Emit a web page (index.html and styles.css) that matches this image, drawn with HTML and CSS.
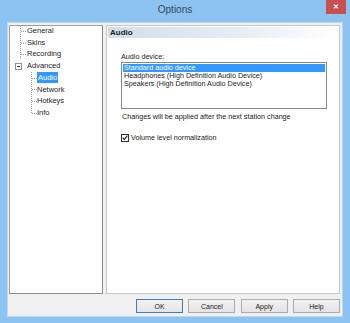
FILE: index.html
```html
<!DOCTYPE html>
<html lang="en">
<head>
    <meta charset="UTF-8">
    <title>Options</title>
    <link rel="stylesheet" href="styles.css">
</head>
<body>
    <div class="window">
        <div class="titlebar">
            <div class="title">Options</div>
            <div class="close-btn">&#x2715;</div>
        </div>

        <div class="client">
            <div class="panels">
                <div class="tree">
                    <ul class="tree-root">
                        <li class="tree-item">General</li>
                        <li class="tree-item">Skins</li>
                        <li class="tree-item">Recording</li>
                        <li class="tree-item tree-open">
                            <span class="expander"></span>Advanced
                            <ul class="tree-sub">
                                <li class="tree-item"><span class="selected">Audio</span></li>
                                <li class="tree-item">Network</li>
                                <li class="tree-item">Hotkeys</li>
                                <li class="tree-item">Info</li>
                            </ul>
                        </li>
                    </ul>
                </div>

                <div class="page">
                    <div class="page-header">Audio</div>
                    <div class="page-body">
                        <div class="field-label">Audio device:</div>
                        <div class="listbox">
                            <div class="list-item active">Standard audio device</div>
                            <div class="list-item">Headphones (High Definition Audio Device)</div>
                            <div class="list-item">Speakers (High Definition Audio Device)</div>
                        </div>
                        <div class="hint">Changes will be applied after the next station change</div>
                        <label class="check-row">
                            <span class="checkbox">
                                <svg width="7" height="7" viewBox="0 0 7 7"><path d="M0.8 3.6 L2.7 5.6 L6.3 1.2" fill="none" stroke="#222" stroke-width="1.4"/></svg>
                            </span>
                            Volume level normalization
                        </label>
                    </div>
                </div>
            </div>

            <div class="buttons">
                <button class="btn btn-default">OK</button>
                <button class="btn">Cancel</button>
                <button class="btn">Apply</button>
                <button class="btn">Help</button>
            </div>
        </div>
    </div>
</body>
</html>
```

FILE: styles.css
```css
* {
    margin: 0;
    padding: 0;
    box-sizing: border-box;
}

body {
    font-family: 'Liberation Sans', Arial, sans-serif;
    font-size: 7.2px;
    color: #222;
    background: #8dc3f1;
}

.window {
    width: 350px;
    height: 323px;
    background: #8dc3f1;
    display: flex;
    flex-direction: column;
}

.titlebar {
    height: 22px;
    position: relative;
    display: flex;
    justify-content: center;
}

.title {
    font-size: 10px;
    color: #34455a;
    line-height: 20px;
}

.close-btn {
    position: absolute;
    top: 0;
    left: 326px;
    width: 20px;
    height: 14px;
    background: #c75050;
    color: #fff;
    font-size: 7px;
    font-weight: bold;
    line-height: 14px;
    text-align: center;
}

.client {
    margin: 0 7px 6px 7px;
    flex: 1;
    background: #f0f0f0;
    border: 1px solid #b9d9f4;
    padding: 2px 2px 3px 1px;
    display: flex;
    flex-direction: column;
}

.panels {
    flex: 1;
    display: flex;
    gap: 3px;
}

/* tree */
.tree {
    width: 94px;
    background: #fff;
    border: 1px solid #a0a0a0;
    border-right-color: #8a8a8a;
    border-bottom-color: #8a8a8a;
    padding-left: 10px;
    font-size: 7.5px;
}

.tree ul {
    list-style: none;
}

.tree-root {
    border-left: 1px dotted #a0a0a0;
    margin-top: -1px;
}

.tree-item {
    position: relative;
    line-height: 11.7px;
    padding-left: 6px;
    color: #1e1e1e;
}

.tree-item::before {
    content: "";
    position: absolute;
    left: 0;
    top: 5.8px;
    width: 5px;
    border-top: 1px dotted #a0a0a0;
}

.tree-open {
    margin-left: -1px;
    border-left: 1px solid #fff;
}

.tree-open::before {
    display: none;
}

.expander {
    position: absolute;
    left: -6px;
    top: 2.5px;
    width: 7px;
    height: 7px;
    border: 1px solid #919191;
    background: #fff;
}

.expander::after {
    content: "";
    position: absolute;
    left: 1px;
    top: 2px;
    width: 3px;
    border-top: 1px solid #333;
}

.tree-sub {
    margin-left: 4px;
    border-left: 1px dotted #a0a0a0;
    height: 41px;
}

.tree-sub .tree-item {
    padding-left: 5px;
}

.selected {
    background: #3399ff;
    color: #fff;
    padding: 1px 1px;
}

/* right page */
.page {
    flex: 1;
    background: #fff;
    border: 1px solid #c6c6c6;
    padding: 1px;
}

.page-header {
    height: 11px;
    line-height: 11px;
    padding-left: 2px;
    font-weight: bold;
    font-size: 8px;
    color: #1a1a1a;
    background: linear-gradient(to right, #d3dde8, #e8eef4 60%, #ffffff);
}

.page-body {
    padding: 14px 11px 0 13px;
}

.field-label {
    line-height: 9px;
}

.listbox {
    margin-top: 1px;
    height: 47px;
    border: 1px solid #828790;
    padding: 1px;
}

.list-item {
    height: 8px;
    line-height: 8px;
    padding-left: 1px;
    white-space: nowrap;
}

.list-item.active {
    background: #3399ff;
    color: #fff;
}

.hint {
    margin-top: 3px;
    line-height: 9px;
    padding-left: 1px;
}

.check-row {
    margin-top: 12px;
    display: flex;
    align-items: center;
    gap: 2px;
    line-height: 9px;
}

.checkbox {
    width: 8px;
    height: 8px;
    border: 1px solid #333;
    background: #fff;
    display: flex;
    align-items: center;
    justify-content: center;
}

/* buttons */
.buttons {
    display: flex;
    justify-content: flex-end;
    gap: 5.3px;
    padding-top: 5px;
}

.btn {
    width: 47px;
    height: 14px;
    font-family: 'Liberation Sans', Arial, sans-serif;
    font-size: 7px;
    color: #1a1a1a;
    background: linear-gradient(#f2f2f2, #e4e4e4);
    border: 1px solid #acacac;
}

.btn-default {
    border-color: #3c7fb1;
}
```
